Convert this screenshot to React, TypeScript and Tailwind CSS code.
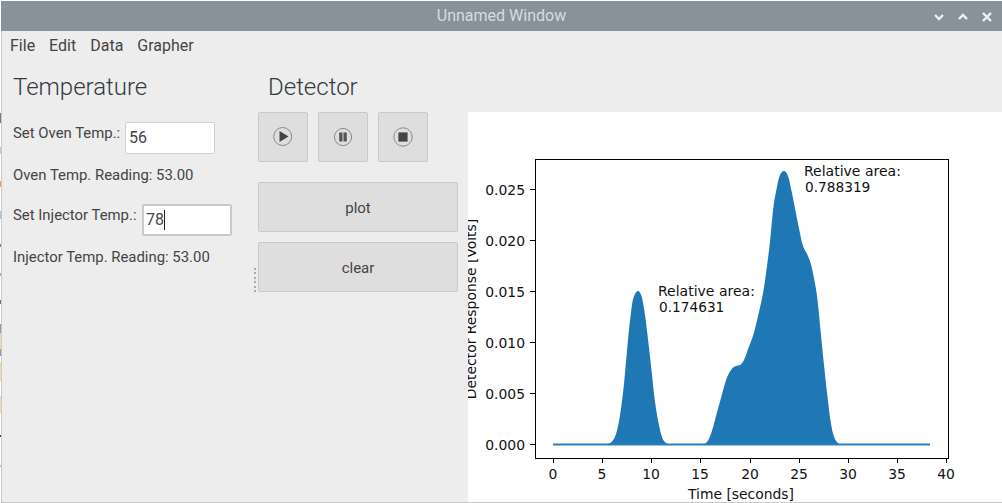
import * as React from 'react';

// outline traced from the plot, in page pixels
const peakOne: [number, number][] = [
    [606, 444.5], [611, 442.5], [615, 436.7], [618.3, 425], [621.5, 405], [624.3, 381], [628, 340], [630.7, 315], [633.3, 298.3], [637.7, 291],
    [641.7, 296.7], [645, 315], [648.3, 341.7], [651.7, 371.7], [655, 401.7], [659.3, 426.7], [663.3, 440], [668.3, 444], [673, 444.5],
];

const peakTwo: [number, number][] = [
    [700, 444.5], [706.7, 442.3], [711.7, 431.7], [716.7, 413.5], [721.7, 395.5], [726.7, 378.3], [731.7, 369], [736, 366], [740, 365], [744, 360],
    [748.3, 348.3], [753.3, 335], [758.3, 315], [763.3, 291.7], [766.7, 268.3], [770, 241.7], [773.3, 208.3], [776.7, 188.3], [780, 175], [784.3, 171],
    [788.3, 176.7], [791.7, 191.7], [795, 208.3], [798.3, 225], [802.7, 245], [806.7, 253.3], [810.7, 263.3], [814, 278.3], [817.3, 298.3], [820.7, 331.7],
    [824, 365], [827.3, 395], [830.7, 421.7], [834, 436.7], [838.3, 443.3], [843.3, 444.5],
];

function smooth(pts: [number, number][]) {
    let d = `M${pts[0][0]} ${pts[0][1]}`;
    for (let i = 0; i < pts.length - 1; i++) {
        const p0 = pts[Math.max(i - 1, 0)];
        const p1 = pts[i];
        const p2 = pts[i + 1];
        const p3 = pts[Math.min(i + 2, pts.length - 1)];
        const c1x = p1[0] + (p2[0] - p0[0]) / 6;
        const c1y = p1[1] + (p2[1] - p0[1]) / 6;
        const c2x = p2[0] - (p3[0] - p1[0]) / 6;
        const c2y = p2[1] - (p3[1] - p1[1]) / 6;
        d += ` C${c1x.toFixed(1)} ${c1y.toFixed(1)} ${c2x.toFixed(1)} ${c2y.toFixed(1)} ${p2[0]} ${p2[1]}`;
    }
    return d + 'Z';
}

const xTicks = [0, 5, 10, 15, 20, 25, 30, 35, 40];
const yTicks = ['0.000', '0.005', '0.010', '0.015', '0.020', '0.025'];

function Chart() {
    return (
        <svg viewBox="468 112 534 390" className="block w-[534px] h-[390px] overflow-hidden" fontFamily="'DejaVu Sans', sans-serif" fontSize="13.9" fill="#111">
            <path d={smooth(peakOne)} fill="#1f77b4" />
            <path d={smooth(peakTwo)} fill="#1f77b4" />
            <line x1="553" x2="930" y1="444.5" y2="444.5" stroke="#2b80ba" strokeWidth="2" />
            <rect x="535.5" y="159.5" width="413" height="299" fill="none" stroke="#000" strokeWidth="1" />
            {xTicks.map((t) => {
                const x = Math.round(553 + t * 9.83) + 0.5;
                return (
                    <g key={t}>
                        <line x1={x} x2={x} y1="458" y2="463" stroke="#000" />
                        <text x={x - 0.5} y="479" textAnchor="middle">{t}</text>
                    </g>
                );
            })}
            {yTicks.map((t, i) => {
                const y = Math.round(445 - i * 51.1) - 0.5;
                return (
                    <g key={t}>
                        <line x1="530" x2="535" y1={y} y2={y} stroke="#000" />
                        <text x="525" y={y + 5} textAnchor="end">{t}</text>
                    </g>
                );
            })}
            <text x="741" y="499" textAnchor="middle">Time [seconds]</text>
            <text transform="translate(476 309) rotate(-90)" textAnchor="middle">Detector Response [Volts]</text>
            <text x="658" y="296" fontSize="14">Relative area:</text>
            <text x="659" y="312" fontSize="13.7">0.174631</text>
            <text x="804" y="176" fontSize="14">Relative area:</text>
            <text x="805" y="192" fontSize="13.7">0.788319</text>
        </svg>
    );
}

function IconButton({ children }: { children: React.ReactNode }) {
    return (
        <div className="w-[50px] h-[50px] bg-[#dedede] border border-[#c9c9c9] rounded-[2px] flex items-center justify-center">
            <svg viewBox="0 0 24 24" className="w-[24px] h-[24px]">{children}</svg>
        </div>
    );
}

function WideButton({ label }: { label: string }) {
    return (
        <div className="w-[200px] h-[50px] pt-[2px] bg-[#dedede] border border-[#c9c9c9] rounded-[2px] flex items-center justify-center text-[15px] text-[#444]">
            {label}
        </div>
    );
}

// slivers of the desktop showing left of the window
const slivers = [
    ['h-[3px]', 'bg-white'], ['h-[110px]', 'bg-white'], ['h-[10px]', 'bg-[#777777]'], ['h-[24px]', 'bg-white'], ['h-[7px]', 'bg-[#a8d4ee]'],
    ['h-[27px]', 'bg-white'], ['h-[6px]', 'bg-[#e8a060]'], ['h-[24px]', 'bg-white'], ['h-[8px]', 'bg-[#9cc4e0]'], ['h-[25px]', 'bg-white'],
    ['h-[3px]', 'bg-[#5b8fc0]'], ['h-[26px]', 'bg-white'], ['h-[3px]', 'bg-[#d8a070]'], ['h-[24px]', 'bg-white'], ['h-[4px]', 'bg-[#777777]'],
    ['h-[20px]', 'bg-white'], ['h-[9px]', 'bg-[#8a9aa8]'], ['h-[16px]', 'bg-[#f5dc98]'], ['h-[7px]', 'bg-[#8a9aa8]'], ['h-[6px]', 'bg-white'],
    ['h-[19px]', 'bg-[#f5dc98]'], ['h-[15px]', 'bg-white'], ['h-[17px]', 'bg-[#f5dc98]'], ['h-[22px]', 'bg-white'], ['h-[2px]', 'bg-[#444444]'],
    ['h-[28px]', 'bg-white'], ['h-[2px]', 'bg-[#9cc4e0]'], ['h-[38px]', 'bg-white'],
];

export default function App() {
    return (
        <div className="w-[1002px] h-[503px] flex overflow-hidden bg-white font-['Roboto',sans-serif] text-[#444]">
            <div className="w-px h-full flex flex-col shrink-0">
                {slivers.map(([h, c], i) => (
                    <div key={i} className={`${h} ${c} shrink-0`} />
                ))}
            </div>
            <div className="flex-1 flex flex-col mt-px">
                <header className="h-[30px] shrink-0 bg-[#87929b] flex items-center relative">
                    <div className="w-full text-center text-[16px] text-[#d9dcde]">Unnamed Window</div>
                    <div className="absolute right-[7px] top-[7px] flex gap-[8px]">
                        <svg viewBox="0 0 16 16" className="w-[16px] h-[16px]"><path d="M4 7l4 4 4-4" fill="none" stroke="#f2f2f2" strokeWidth="2.4" /></svg>
                        <svg viewBox="0 0 16 16" className="w-[16px] h-[16px]"><path d="M4 11l4-4 4 4" fill="none" stroke="#f2f2f2" strokeWidth="2.4" /></svg>
                        <svg viewBox="0 0 16 16" className="w-[16px] h-[16px]"><path d="M4 5l8 8M12 5l-8 8" fill="none" stroke="#f2f2f2" strokeWidth="2.4" /></svg>
                    </div>
                </header>
                <div className="flex-1 flex flex-col bg-[#ededed] border-l border-b border-[#c9c9c9] min-h-0">
                    <nav className="h-[30px] shrink-0 flex items-center gap-[14px] pl-[8px] text-[16px] text-[#444]">
                        <span>File</span>
                        <span>Edit</span>
                        <span>Data</span>
                        <span>Grapher</span>
                    </nav>
                    <div className="flex-1 flex min-h-0">
                        <div className="w-[250px] shrink-0 pl-[11px]">
                            <h2 className="h-[51px] pt-[12px] text-[24px] leading-[28px] font-light text-[#33393f]">Temperature</h2>
                            <div className="flex items-start mt-[10px]">
                                <span className="w-[112px] text-[14.9px] leading-[20px] mt-[1px]">Set Oven Temp.:</span>
                                <div className="w-[90px] h-[32px] bg-white border border-[#cfcfcf] rounded-[2px] pl-[3px] text-[16px] leading-[30px]">56</div>
                            </div>
                            <div className="text-[14.9px] leading-[20px] mt-[11px]">Oven Temp. Reading: 53.00</div>
                            <div className="flex items-start mt-[19px]">
                                <span className="w-[129px] text-[14.9px] leading-[20px] mt-[1px]">Set Injector Temp.:</span>
                                <div className="w-[90px] h-[32px] bg-white border-2 border-[#c9c9c9] rounded-[2px] pl-[2px] text-[16px] leading-[28px] flex items-center">
                                    78<span className="w-px h-[20px] bg-[#222]" />
                                </div>
                            </div>
                            <div className="text-[14.9px] leading-[20px] mt-[11px]">Injector Temp. Reading: 53.00</div>
                        </div>
                        <div className="w-[6px] shrink-0 pt-[207px] pl-[2px]">
                            <div className="w-[2px] h-[24px] flex flex-col justify-between">
                                {[0, 1, 2, 3, 4, 5].map((i) => (
                                    <div key={i} className="w-[2px] h-[2px] bg-[#aaaaaa]" />
                                ))}
                            </div>
                        </div>
                        <div className="w-[200px] shrink-0">
                            <h2 className="h-[51px] pt-[12px] pl-[10px] text-[24px] leading-[28px] font-light text-[#33393f]">Detector</h2>
                            <div className="flex gap-[10px]">
                                <IconButton>
                                    <circle cx="11.7" cy="11.5" r="9" fill="none" stroke="#8a8a8a" strokeWidth="1" />
                                    <path d="M8.5 6v11l9-5.5z" fill="#444" />
                                </IconButton>
                                <IconButton>
                                    <circle cx="12" cy="12" r="8.6" fill="none" stroke="#8a8a8a" strokeWidth="1" />
                                    <rect x="8.2" y="7.5" width="3.3" height="9" fill="#555" />
                                    <rect x="12.5" y="7.5" width="3.3" height="9" fill="#555" />
                                </IconButton>
                                <IconButton>
                                    <circle cx="12" cy="12" r="9.2" fill="none" stroke="#8a8a8a" strokeWidth="1" />
                                    <rect x="7.4" y="7.4" width="9.2" height="9.2" fill="#444" />
                                </IconButton>
                            </div>
                            <div className="flex flex-col gap-[10px] mt-[20px]">
                                <WideButton label="plot" />
                                <WideButton label="clear" />
                            </div>
                        </div>
                        <div className="flex-1 ml-[10px] pt-[51px] min-w-0">
                            <div className="bg-white h-full overflow-hidden">
                                <Chart />
                            </div>
                        </div>
                    </div>
                </div>
            </div>
        </div>
    );
}
